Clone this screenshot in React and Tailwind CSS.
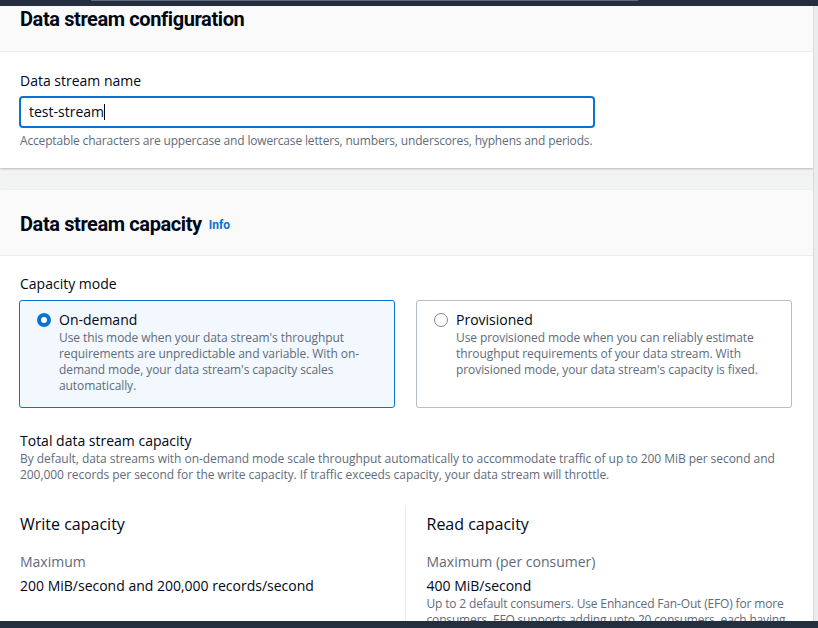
import React from 'react';

const Radio = ({ checked }) =>
  checked ? (
    <span className="w-[14px] h-[14px] rounded-full border-[4px] border-[#0972d3] bg-white shrink-0" />
  ) : (
    <span className="w-[14px] h-[14px] rounded-full border-[1.5px] border-[#7d8998] bg-white shrink-0" />
  );

const Tile = ({ checked, title, children }) => (
  <div
    className={
      checked
        ? 'flex-1 h-[108px] rounded-[3px] border border-[#0972d3] bg-[#f2f8fd] pl-[17px] pr-4 pt-[9px]'
        : 'flex-1 h-[108px] rounded-[3px] border border-[#b6bec9] bg-white pl-[17px] pr-4 pt-[9px]'
    }
  >
    <div className="flex items-center gap-[8px] h-[20px]">
      <Radio checked={checked} />
      <span className="text-[14px] leading-[20px] text-[#000716]">{title}</span>
    </div>
    <p className="pl-[22px] text-[12px] leading-[16px] tracking-[-0.08px] text-[#5f6b7a]">{children}</p>
  </div>
);

export default function App() {
  return (
    <div className="w-[818px] h-[628px] overflow-hidden bg-[#f2f3f3] flex flex-col font-['Open_Sans',sans-serif] text-[#000716]">
      {/* top nav sliver */}
      <div className="h-[6px] bg-[#232f3e] relative shrink-0">
        <div className="absolute left-[91px] top-0 w-[547px] h-[1px] bg-[#5f6b7a]" />
      </div>

      <div className="flex flex-1 min-h-0">
        <div className="flex-1 flex flex-col gap-[22px] overflow-hidden">
          {/* Panel 1 */}
          <section className="bg-white shadow-[0_1px_2px_rgba(0,7,22,0.25)] shrink-0">
            <div className="h-[46px] bg-[#fafafa] border-b border-[#eaeded] px-5 pt-[1px]">
              <h2 className="font-['Roboto',sans-serif] font-bold text-[20px] leading-[24px] tracking-[-0.4px]">
                Data stream configuration
              </h2>
            </div>
            <div className="px-5 pt-[19px] pb-[19px]">
              <label className="block text-[14px] leading-[20px]">Data stream name</label>
              <div className="mt-[5px] w-[576px] h-[32px] -ml-px rounded-[4px] border-2 border-[#0972d3] flex items-center pl-[8px]">
                <span className="text-[14px] leading-[20px]">test-stream</span>
                <span className="w-px h-[16px] bg-[#000716]" />
              </div>
              <p className="mt-[5px] text-[12px] leading-[16px] tracking-[-0.16px] text-[#5f6b7a]">
                Acceptable characters are uppercase and lowercase letters, numbers, underscores, hyphens and periods.
              </p>
            </div>
          </section>

          {/* Panel 2 */}
          <section className="bg-white shadow-[0_1px_2px_rgba(0,7,22,0.25)] flex-1">
            <div className="h-[66px] bg-[#fafafa] border-b border-[#eaeded] px-5 pt-[22px] flex items-start gap-[7px]">
              <h2 className="font-['Roboto',sans-serif] font-bold text-[20px] leading-[24px] tracking-[-0.4px]">
                Data stream capacity
              </h2>
              <span className="font-['Roboto',sans-serif] font-bold text-[12px] leading-[26px] text-[#0972d3]">
                Info
              </span>
            </div>
            <div className="pl-[19px] pr-[21px] pt-[18px]">
              <div className="pl-px text-[14px] leading-[20px]">Capacity mode</div>
              <div className="mt-[6px] flex gap-[21px]">
                <Tile checked title="On-demand">
                  Use this mode when your data stream's throughput requirements are unpredictable and variable. With
                  on-demand mode, your data stream's capacity scales automatically.
                </Tile>
                <Tile title="Provisioned">
                  Use provisioned mode when you can reliably estimate throughput requirements of your data stream. With
                  provisioned mode, your data stream's capacity is fixed.
                </Tile>
              </div>

              <div className="pl-px mt-[23px] text-[14px] leading-[20px]">Total data stream capacity</div>
              <p className="pl-px text-[12px] leading-[16px] tracking-[-0.05px] text-[#5f6b7a]">
                By default, data streams with on-demand mode scale throughput automatically to accommodate traffic of up
                to 200 MiB per second and 200,000 records per second for the write capacity. If traffic exceeds
                capacity, your data stream will throttle.
              </p>

              <div className="mt-[24px] grid grid-cols-2">
                <div className="pl-px pt-[6px] border-r border-[#eaeded]">
                  <h3 className="text-[16px] leading-[22px]">Write capacity</h3>
                  <div className="mt-[17px] text-[14px] leading-[20px] text-[#5f6b7a]">Maximum</div>
                  <div className="mt-[4px] text-[14px] leading-[20px]">200 MiB/second and 200,000 records/second</div>
                </div>
                <div className="pl-[21px] pt-[6px]">
                  <h3 className="text-[16px] leading-[22px]">Read capacity</h3>
                  <div className="mt-[17px] text-[14px] leading-[20px] text-[#5f6b7a]">Maximum (per consumer)</div>
                  <div className="mt-[4px] text-[14px] leading-[20px]">400 MiB/second</div>
                  <p className="-mr-[4px] text-[12px] leading-[16px] tracking-[-0.16px] text-[#5f6b7a]">
                    Up to 2 default consumers. Use Enhanced Fan-Out (EFO) for more consumers. EFO supports adding upto
                    20 consumers, each having dedicated throughput.
                  </p>
                </div>
              </div>
            </div>
          </section>
        </div>
        <div className="w-[5px] shrink-0 border-l border-[#d5dbdb] bg-[#eaeded]" />
      </div>

      <div className="h-[7px] bg-[#232f3e] shrink-0" />
    </div>
  );
}
